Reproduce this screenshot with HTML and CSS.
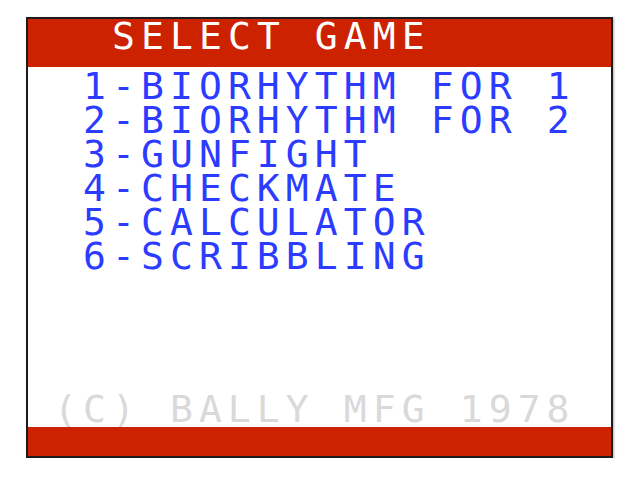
FILE: index.html
```html
<!DOCTYPE html>
<html lang="en">
<head>
    <meta charset="UTF-8">
    <title>Select Game</title>
    <link rel="stylesheet" href="styles.css">
</head>
<body>

<!-- Pantalla de menú -->
<div class="screen">
    <div class="title">SELECT GAME</div>

    <ul class="menu">
        <li>1-BIORHYTHM FOR 1</li>
        <li>2-BIORHYTHM FOR 2</li>
        <li>3-GUNFIGHT</li>
        <li>4-CHECKMATE</li>
        <li>5-CALCULATOR</li>
        <li>6-SCRIBBLING</li>
    </ul>

    <div class="copyright">(C) BALLY MFG 1978</div>
    <div class="bottom-bar"></div>
</div>

</body>
</html>
```

FILE: styles.css
```css
body {
    margin: 0;
    background-color: #fff;
    font-family: "DejaVu Sans Mono", monospace;
}

.screen {
    margin: 17px 0 0 26px;
    width: 583px;
    height: 437px;
    border: 2px solid #1c1c1c;
    box-shadow: 1px 1px 2px rgba(0,0,0,0.3);
    display: flex;
    flex-direction: column;
    background-color: #fff;
}

.title,
.menu li,
.copyright {
    font-size: 38px;
    line-height: 34px;
    letter-spacing: 6.1px;
    white-space: pre;
}

.title {
    height: 48px;
    padding-left: 84px;
    background-color: #cc2200;
    color: #fff;
}

.menu {
    list-style: none;
    margin: 0;
    padding: 2px 0 0 55px;
    color: #2b3bff;
}

.copyright {
    margin-top: auto;
    padding-left: 26px;
    color: #d9d9d9;
}

.bottom-bar {
    height: 29px;
    margin-top: 1px;
    background-color: #cc2200;
}
```
